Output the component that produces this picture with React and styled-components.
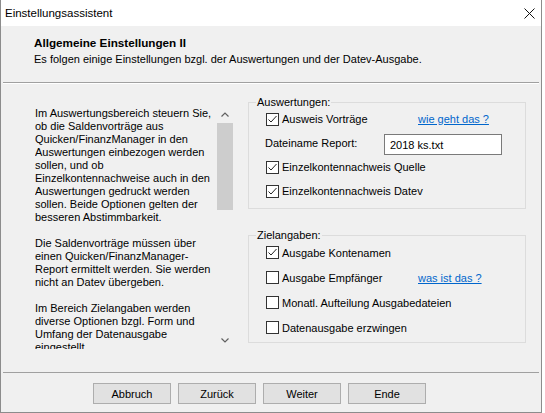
import React from 'react';
import styled, { createGlobalStyle } from 'styled-components';

const GlobalStyle = createGlobalStyle`
  body {
    margin: 0;
    background: #ffffff;
    font-family: "Liberation Sans", Arial, sans-serif;
    color: #000;
  }
`;

const Window = styled.div`
  width: 542px;
  height: 413px;
  box-sizing: border-box;
  border: 1px solid #8c8c8c;
  border-top: none;
  background: #f0f0f0;
  display: flex;
  flex-direction: column;
`;

const TitleBar = styled.div`
  height: 26px;
  flex: none;
  background: #fff;
  display: flex;
  align-items: center;
  justify-content: space-between;
  padding-left: 4px;
  padding-right: 6px;
  font-size: 11.5px;
`;

const Header = styled.div`
  height: 57px;
  flex: none;
  margin: 0 2px;
  padding: 8px 0 0 31px;
  box-sizing: border-box;
  border-bottom: 1px solid #a0a0a0;
  box-shadow: 0 1px 0 #ffffff;
`;

const HeaderTitle = styled.div`
  font-weight: bold;
  font-size: 11.7px;
  line-height: 17px;
`;

const HeaderText = styled.div`
  font-size: 11px;
  line-height: 17px;
`;

const Body = styled.div`
  flex: 1;
  display: flex;
  padding: 11px 14px 0 34px;
  margin-top: 1px;
`;

const LeftPanel = styled.div`
  display: flex;
  margin-top: 11px;
  height: 243px;
  width: 198px;
  flex: none;
`;

const InfoText = styled.div`
  width: 182px;
  overflow: hidden;
  padding-top: 1px;
  box-sizing: border-box;
  font-size: 11px;
  line-height: 13px;
  white-space: nowrap;

  p {
    margin: 0 0 13px 0;
  }
  span {
    display: block;
  }
`;

const ScrollBar = styled.div`
  width: 16px;
  display: flex;
  flex-direction: column;
`;

const ScrollArrow = styled.div`
  height: 17px;
  display: flex;
  align-items: center;
  justify-content: center;
  flex: none;
`;

const ScrollThumb = styled.div`
  height: 87px;
  background: #cdcdcd;
  flex: none;
`;

const ScrollTrack = styled.div`
  flex: 1;
`;

const RightColumn = styled.div`
  width: 278px;
  margin-left: 15px;
  display: flex;
  flex-direction: column;
  gap: 19px;
`;

const Group = styled.fieldset`
  margin: 0;
  padding: 0;
  border: 1px solid #dcdcdc;
  min-width: 0;
`;

const Legend = styled.legend`
  margin-left: 7px;
  padding: 0 1px;
  font-size: 11px;
  line-height: 14px;
`;

const Rows = styled.div`
  margin-top: -2px;
  padding: 0 0 ${p => p.$bottom}px 17px;
`;

const Row = styled.div`
  height: ${p => p.$h}px;
  display: flex;
  align-items: center;
  font-size: 11px;
`;

const CheckLabel = styled.label`
  width: 152px;
  flex: none;
  display: flex;
  align-items: center;
  white-space: nowrap;
`;

const Box = styled.span`
  width: 13px;
  height: 13px;
  box-sizing: border-box;
  border: 1px solid #333;
  background: #fff;
  margin-right: 3px;
  flex: none;
  display: flex;
  align-items: center;
  justify-content: center;
`;

const Link = styled.a`
  color: #0066cc;
  text-decoration: underline;
  white-space: nowrap;
  cursor: pointer;
`;

const FieldLabel = styled.span`
  width: 119px;
  flex: none;
  margin-left: -1px;
`;

const TextInput = styled.div`
  width: 118px;
  height: 21px;
  box-sizing: border-box;
  border: 1px solid #7a7a7a;
  background: #fff;
  padding-left: 5px;
  display: flex;
  align-items: center;
  margin-top: 3px;
`;

const Footer = styled.div`
  height: 40px;
  flex: none;
  margin: 0 2px;
  box-sizing: border-box;
  border-top: 1px solid #a0a0a0;
  padding: 10px 0 0 90px;
  display: flex;
  gap: 7px;
`;

const Button = styled.button`
  width: 78px;
  height: 21px;
  background: #e1e1e1;
  border: 1px solid #adadad;
  font-family: "Liberation Sans", Arial, sans-serif;
  font-size: 11px;
  color: #000;
  padding: 0;
`;

const Check = ({ checked }) => (
  <Box>
    {checked && (
      <svg width="11" height="11" viewBox="0 0 11 11">
        <path d="M1.5 5.5 L4 8 L9.5 2" fill="none" stroke="#222" strokeWidth="1" />
      </svg>
    )}
  </Box>
);

const CheckRow = ({ h, checked, label, link }) => (
  <Row $h={h}>
    <CheckLabel>
      <Check checked={checked} />
      {label}
    </CheckLabel>
    {link && <Link>{link}</Link>}
  </Row>
);

const Chevron = ({ down }) => (
  <svg width="8" height="5" viewBox="0 0 8 5">
    <path d={down ? 'M0.5 0.5 L4 4 L7.5 0.5' : 'M0.5 4.5 L4 1 L7.5 4.5'} fill="none" stroke="#606060" strokeWidth="1.2" />
  </svg>
);

const info = [
  [
    'Im Auswertungsbereich steuern Sie,',
    'ob die Saldenvorträge aus',
    'Quicken/FinanzManager in den',
    'Auswertungen einbezogen werden',
    'sollen, und ob',
    'Einzelkontennachweise auch in den',
    'Auswertungen gedruckt werden',
    'sollen. Beide Optionen gelten der',
    'besseren Abstimmbarkeit.',
  ],
  [
    'Die Saldenvorträge müssen über',
    'einen Quicken/FinanzManager-',
    'Report ermittelt werden. Sie werden',
    'nicht an Datev übergeben.',
  ],
  [
    'Im Bereich Zielangaben werden',
    'diverse Optionen bzgl. Form und',
    'Umfang der Datenausgabe',
    'eingestellt.',
  ],
];

export default function App() {
  return (
    <>
      <GlobalStyle />
      <Window>
        <TitleBar>
          <span>Einstellungsassistent</span>
          <svg width="11" height="11" viewBox="0 0 11 11">
            <path d="M0.5 0.5 L10.5 10.5 M10.5 0.5 L0.5 10.5" stroke="#111" strokeWidth="1" />
          </svg>
        </TitleBar>
        <Header>
          <HeaderTitle>Allgemeine Einstellungen II</HeaderTitle>
          <HeaderText>Es folgen einige Einstellungen bzgl. der Auswertungen und der Datev-Ausgabe.</HeaderText>
        </Header>
        <Body>
          <LeftPanel>
            <InfoText>
              {info.map((para, i) => (
                <p key={i}>
                  {para.map(line => <span key={line}>{line}</span>)}
                </p>
              ))}
            </InfoText>
            <ScrollBar>
              <ScrollArrow><Chevron /></ScrollArrow>
              <ScrollThumb />
              <ScrollTrack />
              <ScrollArrow><Chevron down /></ScrollArrow>
            </ScrollBar>
          </LeftPanel>
          <RightColumn>
            <Group>
              <Legend>Auswertungen:</Legend>
              <Rows $bottom={5}>
                <CheckRow h={24} checked label="Ausweis Vorträge" link="wie geht das ?" />
                <Row $h={24}>
                  <FieldLabel>Dateiname Report:</FieldLabel>
                  <TextInput>2018 ks.txt</TextInput>
                </Row>
                <CheckRow h={24} checked label="Einzelkontennachweis Quelle" />
                <CheckRow h={24} checked label="Einzelkontennachweis Datev" />
              </Rows>
            </Group>
            <Group>
              <Legend>Zielangaben:</Legend>
              <Rows $bottom={2}>
                <CheckRow h={25} checked label="Ausgabe Kontenamen" />
                <CheckRow h={25} label="Ausgabe Empfänger" link="was ist das ?" />
                <CheckRow h={25} label="Monatl. Aufteilung Ausgabedateien" />
                <CheckRow h={25} label="Datenausgabe erzwingen" />
              </Rows>
            </Group>
          </RightColumn>
        </Body>
        <Footer>
          <Button>Abbruch</Button>
          <Button>Zurück</Button>
          <Button>Weiter</Button>
          <Button>Ende</Button>
        </Footer>
      </Window>
    </>
  );
}
